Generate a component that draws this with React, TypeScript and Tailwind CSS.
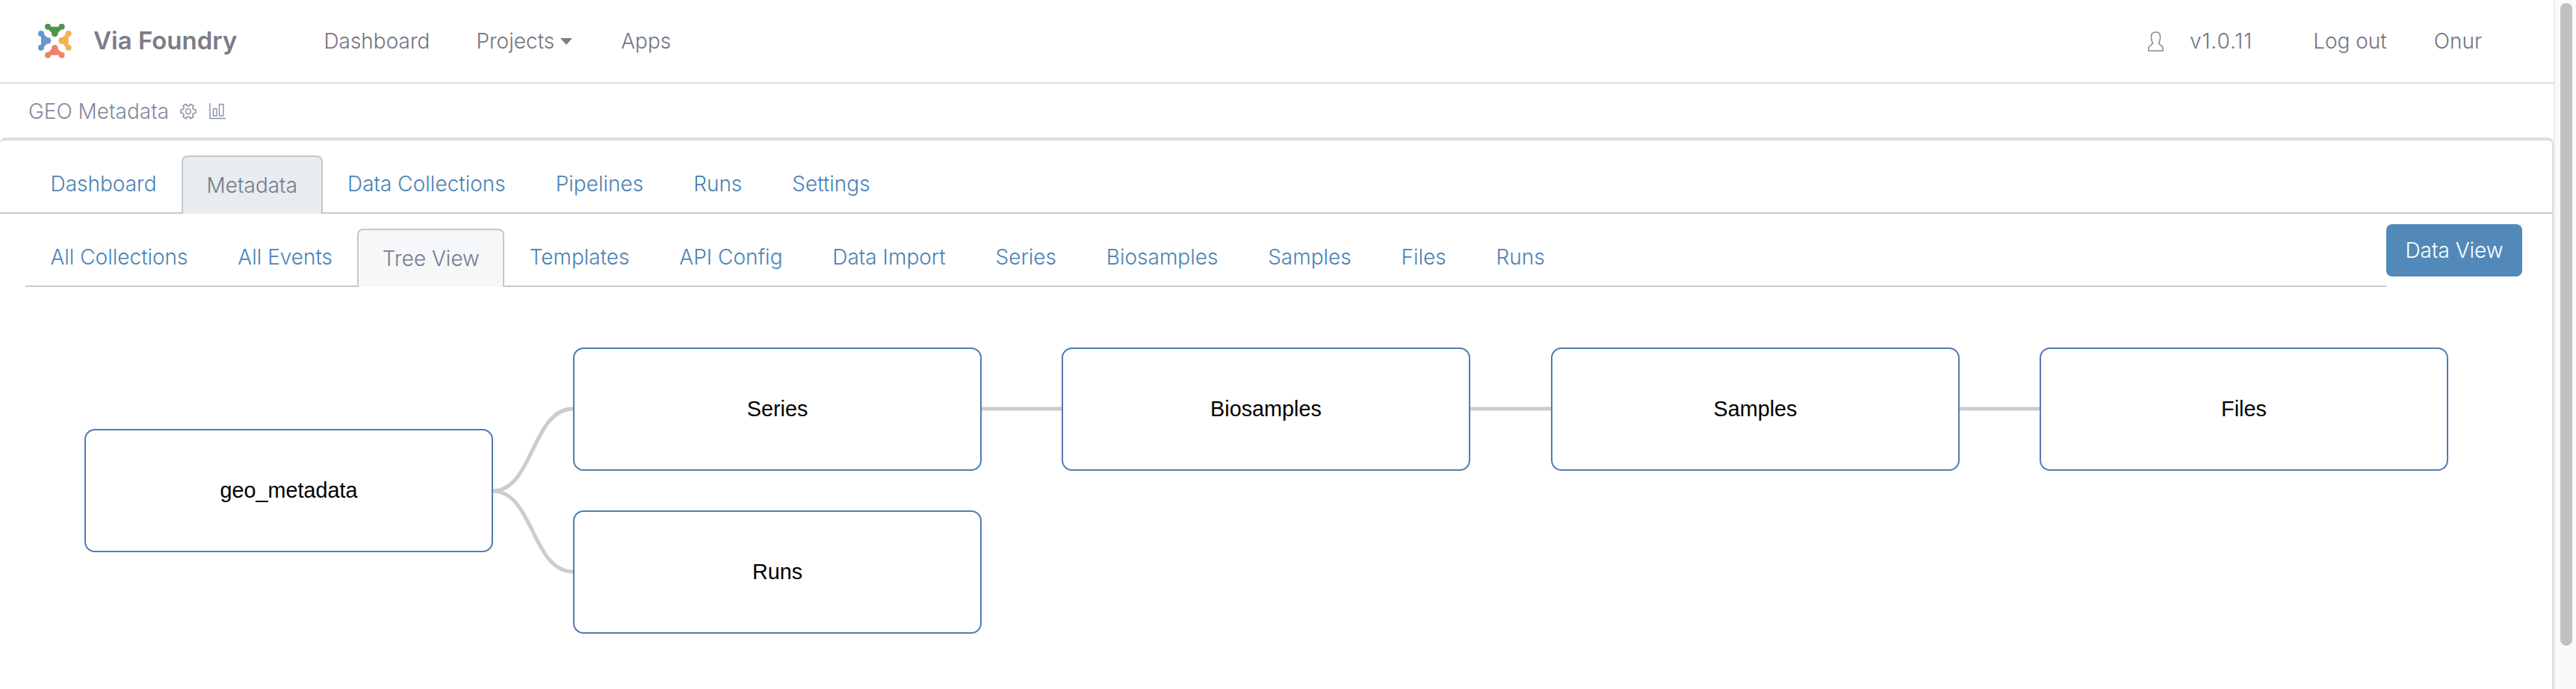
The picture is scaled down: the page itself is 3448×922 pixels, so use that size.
const mainTabs = ['Dashboard', 'Metadata', 'Data Collections', 'Pipelines', 'Runs', 'Settings'];
const subTabs = [
  'All Collections',
  'All Events',
  'Tree View',
  'Templates',
  'API Config',
  'Data Import',
  'Series',
  'Biosamples',
  'Samples',
  'Files',
  'Runs',
];

const nodes = [
  { label: 'geo_metadata', className: 'left-[113px] top-[190px]' },
  { label: 'Series', className: 'left-[767px] top-[81px]' },
  { label: 'Runs', className: 'left-[767px] top-[299px]' },
  { label: 'Biosamples', className: 'left-[1421px] top-[81px]' },
  { label: 'Samples', className: 'left-[2076px] top-[81px]' },
  { label: 'Files', className: 'left-[2730px] top-[81px]' },
];

const logoParts = [
  { color: '#4f9448', a: [42, 14], b: [98, 14], c: [70, 42] },
  { color: '#6b97c7', a: [15, 42], b: [15, 98], c: [42, 70] },
  { color: '#f1b24f', a: [125, 42], b: [125, 98], c: [98, 70] },
  { color: '#f08269', a: [42, 128], b: [98, 128], c: [70, 100] },
];

function Logo() {
  return (
    <svg width="47" height="48" viewBox="0 0 141 144" fill="none" strokeWidth="13" strokeLinecap="round" strokeLinejoin="round">
      {logoParts.map(({ color, a, b, c }) => (
        <g key={color} stroke={color} fill={color}>
          <path d={`M${a[0]} ${a[1]} L${c[0]} ${c[1]} L${b[0]} ${b[1]}`} />
          <circle cx={a[0]} cy={a[1]} r="12" stroke="none" />
          <circle cx={b[0]} cy={b[1]} r="12" stroke="none" />
          <circle cx={c[0]} cy={c[1]} r="13" stroke="none" />
        </g>
      ))}
    </svg>
  );
}

// six lobed cog, teeth every 60deg
const cogPath = () => {
  const point = (deg: number, r: number) => {
    const rad = (deg * Math.PI) / 180;
    return `${(11 + r * Math.cos(rad)).toFixed(2)} ${(11 + r * Math.sin(rad)).toFixed(2)}`;
  };
  let d = '';
  for (let i = 0; i < 6; i++) {
    const a = i * 60;
    d += `${i === 0 ? 'M' : 'L'}${point(a - 20, 7.4)} L${point(a - 13, 10.2)} L${point(a + 13, 10.2)} L${point(a + 20, 7.4)} `;
  }
  return `${d}Z`;
};

function CogIcon() {
  return (
    <svg width="22" height="22" viewBox="0 0 22 22" fill="none" stroke="#8592a3" strokeWidth="1.5" strokeLinejoin="round">
      <path d={cogPath()} />
      <circle cx="11" cy="11" r="3.4" />
    </svg>
  );
}

function ChartIcon() {
  return (
    <svg width="22" height="22" viewBox="0 0 22 22" fill="none" stroke="#8592a3" strokeWidth="1.4">
      <path d="M1 0 V20.5 H22" />
      <rect x="5.5" y="7.5" width="4.5" height="9.5" rx="0.5" />
      <rect x="13.5" y="1.5" width="5.5" height="15.5" rx="0.5" />
    </svg>
  );
}

function UserIcon() {
  return (
    <svg width="21" height="27" viewBox="0 0 21 27" fill="none" stroke="#8b8b96" strokeWidth="1.6">
      <path d="M1 26 H20 V22 C20 19 15 18.5 14.5 15.5 C16 13.5 16.5 10 16.5 7 C16.5 3 14 1 10.5 1 C7 1 4.5 3 4.5 7 C4.5 10 5 13.5 6.5 15.5 C6 18.5 1 19 1 22 Z" />
    </svg>
  );
}

export default function App() {
  return (
    <div className="flex h-[922px] w-full overflow-hidden bg-white font-['Inter',sans-serif] text-[28px] font-light">
      <div className="flex min-w-0 flex-1 flex-col">
        <header className="flex h-[112px] shrink-0 items-center border-b-2 border-[#dcdde1] pl-[50px] pr-[96px] text-[#74747f]">
          <Logo />
          <span className="ml-[28px] text-[33px] font-semibold text-[#7c7c88]">Via Foundry</span>
          <nav className="ml-[116px] flex items-center">
            <a>Dashboard</a>
            <a className="ml-[62px] flex items-center">
              Projects
              <span className="ml-[8px] h-0 w-0 border-x-[8px] border-t-[9px] border-x-transparent border-t-[#7c7c88]" />
            </a>
            <a className="ml-[65px]">Apps</a>
          </nav>
          <div className="ml-auto flex items-center">
            <UserIcon />
            <span className="ml-[35px] tracking-[0.9px]">v1.0.11</span>
            <a className="ml-[81px]">Log out</a>
            <a className="ml-[63px]">Onur</a>
          </div>
        </header>

        <div className="flex h-[72px] shrink-0 items-center pl-[38px] pt-[1px] text-[#7f8c9d]">
          <span>GEO Metadata</span>
          <span className="ml-[15px] flex">
            <CogIcon />
          </span>
          <span className="ml-[17px] flex">
            <ChartIcon />
          </span>
        </div>

        <main className="flex min-h-0 flex-1 flex-col rounded-t-[8px] border-t-4 border-r-2 border-[#dcdde1]">
          <div className="flex h-[98px] shrink-0 items-end border-b-2 border-[#c4c8cd] pl-[34px]">
            {mainTabs.map((tab) => (
              <a
                key={tab}
                className={
                  tab === 'Metadata'
                    ? '-mb-[2px] flex h-[78px] items-center rounded-t-[8px] border-x-2 border-t-2 border-[#c4c8cd] bg-[#e9ecef] px-[31.5px] text-[#727d8d]'
                    : 'flex h-[76px] items-center px-[33.5px] text-[#4a82b4]'
                }
              >
                {tab}
              </a>
            ))}
          </div>

          <div className="flex h-[98px] shrink-0 items-start pl-[34px] pr-[40px]">
            <div className="flex h-[98px] flex-1 items-end border-b-2 border-[#c4c8cd]">
              {subTabs.map((tab) => (
                <a
                  key={tab}
                  className={
                    tab === 'Tree View'
                      ? '-mb-[2px] flex h-[78px] items-center rounded-t-[8px] border-x-2 border-t-2 border-[#c4c8cd] bg-[#f6f7f8] px-[31.4px] text-[#727d8d]'
                      : 'flex h-[76px] items-center px-[33.4px] text-[#4a82b4]'
                  }
                >
                  {tab}
                </a>
              ))}
            </div>
            <button type="button" className="mt-[14px] h-[70px] w-[182px] rounded-[8px] bg-[#5289b9] text-white">
              Data View
            </button>
          </div>

          <div className="relative flex-1">
            <svg className="absolute left-0 top-0" width="3418" height="538" fill="none" stroke="#cccccc" strokeWidth="5">
              <path d="M659 273 C714 273 712 163 767 163" />
              <path d="M659 273 C714 273 712 381 767 381" />
              <path d="M1313 163 H1421" />
              <path d="M1968 163 H2076" />
              <path d="M2622 163 H2730" />
            </svg>
            {nodes.map((node) => (
              <div
                key={node.label}
                className={`absolute flex h-[165px] w-[547px] items-center justify-center rounded-[14px] border-2 border-[#4f7db3] bg-white font-['Liberation_Sans',sans-serif] text-[28.8px] font-normal text-black ${node.className}`}
              >
                {node.label}
              </div>
            ))}
          </div>
        </main>
      </div>

      <div className="flex w-[30px] shrink-0 justify-center border-l-2 border-[#ececec] bg-[#fafafa] pt-[4px] pl-[2px]">
        <div className="h-[860px] w-[16px] rounded-full bg-[#c1c1c1]" />
      </div>
    </div>
  );
}
